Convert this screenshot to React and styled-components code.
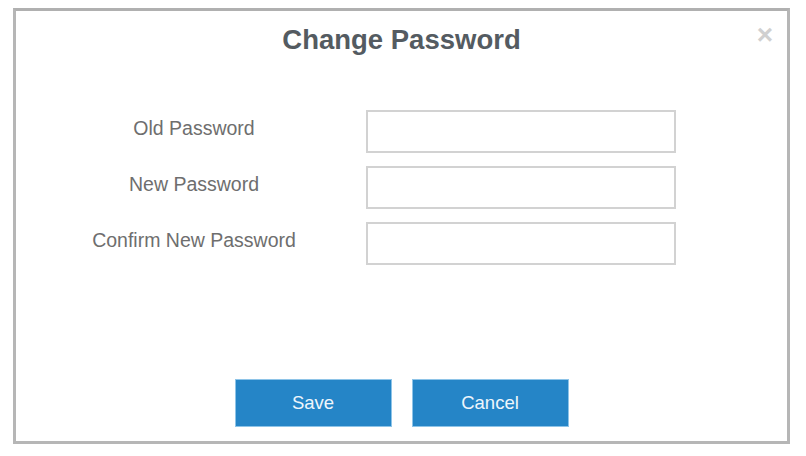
import { Fragment } from "react";
import styled, { createGlobalStyle } from "styled-components";

const GlobalStyle = createGlobalStyle`
  html, body {
    margin: 0;
    padding: 0;
    background: #ffffff;
    font-family: "Liberation Sans", Arial, sans-serif;
  }
`;

const Page = styled.div`
  width: 806px;
  height: 456px;
  padding: 8px 0 0 13px;
  box-sizing: border-box;
`;

const Dialog = styled.div`
  position: relative;
  width: 777px;
  height: 436px;
  box-sizing: border-box;
  border: 3px solid #b6b6b6;
  border-top-color: #b0b0b0;
  background: #ffffff;
  display: flex;
  flex-direction: column;
`;

const Title = styled.h2`
  margin: 13px 0 0;
  text-align: center;
  font-size: 27.5px;
  line-height: 32px;
  font-weight: bold;
  color: #545b61;
`;

const Close = styled.button`
  position: absolute;
  top: 11px;
  right: 14px;
  background: none;
  border: none;
  padding: 0;
  cursor: pointer;
  font-family: "Liberation Sans", Arial, sans-serif;
  font-size: 28px;
  line-height: 26px;
  font-weight: bold;
  color: #d0d0d0;
`;

const Form = styled.div`
  display: grid;
  grid-template-columns: 228px 310px;
  column-gap: 58px;
  row-gap: 13px;
  margin: 54px 0 0 64px;
`;

const Label = styled.label`
  align-self: center;
  padding-bottom: 7px;
  text-align: center;
  font-size: 19.5px;
  line-height: 23px;
  color: #6e6e6e;
`;

const Input = styled.input`
  width: 310px;
  height: 43px;
  box-sizing: border-box;
  border: 2px solid #d2d2d2;
  background: #ffffff;
  outline: none;
`;

const Footer = styled.div`
  margin-top: auto;
  padding-bottom: 14px;
  display: flex;
  justify-content: center;
  gap: 20px;
`;

const Button = styled.button`
  width: 157px;
  height: 48px;
  box-sizing: border-box;
  border: 1px solid #8ec4e8;
  background: #2585c7;
  color: #eef6fc;
  font-family: "Liberation Sans", Arial, sans-serif;
  font-size: 18.5px;
  cursor: pointer;
`;

const fields = ["Old Password", "New Password", "Confirm New Password"];

const App = () => {
  return (
    <>
      <GlobalStyle />
      <Page>
        <Dialog>
          <Close>×</Close>
          <Title>Change Password</Title>
          <Form>
            {fields.map((f) => (
              <Fragment key={f}>
                <Label>{f}</Label>
                <Input type="password" />
              </Fragment>
            ))}
          </Form>
          <Footer>
            <Button>Save</Button>
            <Button>Cancel</Button>
          </Footer>
        </Dialog>
      </Page>
    </>
  );
};

export default App;
